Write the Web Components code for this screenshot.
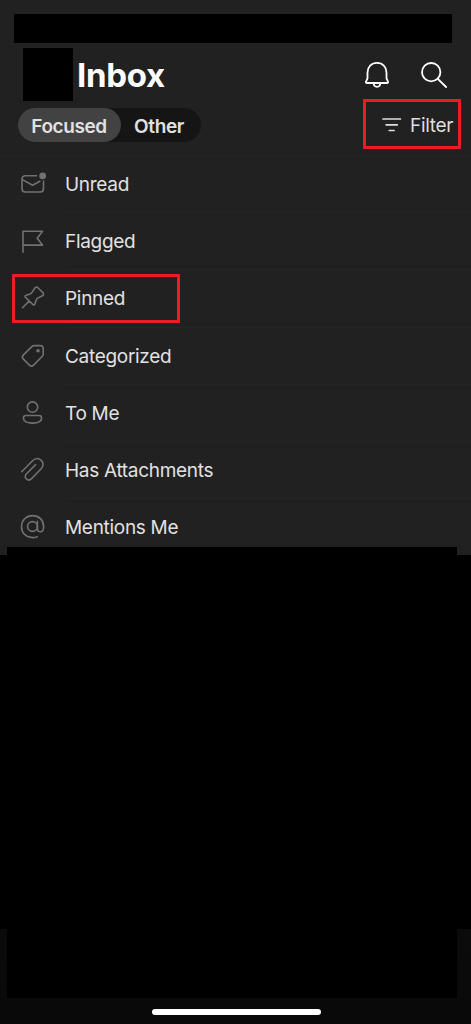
<!DOCTYPE html>
<html lang="en">
<head>
<meta charset="utf-8">
<title>Inbox</title>
<style>
html,body{margin:0;padding:0;background:#000}
body{font-family:Inter,"Liberation Sans",sans-serif}
</style>
</head>
<body>
<mail-app></mail-app>
<script>
const ICONS = {
  unread: '<g transform="translate(0 .8)"><path d="M16.6 4.9H5.2a3.2 3.2 0 0 0-3.2 3.2V18a3.2 3.2 0 0 0 3.2 3.2h15.1a3.2 3.2 0 0 0 3.2-3.2v-7.700M2.300 8.800l10.300 5.600 7.200-4"/><circle cx="22.700" cy="5.100" r="3.400" fill="currentColor" stroke="none"/></g>',
  flag: '<path d="M3 25.3V4.300h19.500l-5.300 6.900 5.300 6.900H3"/>',
  pin: '<path d="M15.1 3.7a2 2 0 0 1 2.8 0l5 4.9a2 2 0 0 1-.5 3.2l-5.1 2.6a2 2 0 0 0-.9 1.1l-1.6 4.7a1.1 1.1 0 0 1-1.8.4L5.400 13.200a1.100 1.100 0 0 1 .4-1.800l4.700-1.600a2 2 0 0 0 1.100-.9zM9.100 17.100l-6.600 6.600"/>',
  tag: '<path d="M14.2 3.6h6.2a2.8 2.8 0 0 1 2.8 2.8v5.8a3 3 0 0 1-.9 2.1l-8.7 8.8a3 3 0 0 1-4.2 0l-6-6a3 3 0 0 1 0-4.2l8.7-8.500a3 3 0 0 1 2.100-.8z"/><circle cx="18" cy="8.7" r="1.800" fill="currentColor" stroke="none"/>',
  person: '<circle cx="12.5" cy="8.1" r="5.2"/><path d="M6 16.500h13a2.600 2.600 0 0 1 2.600 2.600c0 3.300-3.800 5-9.100 5s-9.100-1.700-9.100-5A2.600 2.600 0 0 1 6 16.500z"/>',
  clip: '<path d="M1.700 15.700 12.300 5c3-3 6.300-3.100 8.900-.7 2.600 2.500 2.400 5.900-.3 8.700l-9.300 9.600c-1.700 1.700-3.800 1.700-5.300.3s-1.400-3.400.2-5.100l9.100-9.200"/>',
  at: '<circle cx="12.500" cy="13.500" r="4.900"/><path d="M17.400 8.300v6.900c0 2.400 1.200 3.600 3 3.600 2 0 3.200-1.900 3.200-5.300 0-6.400-4.600-10.900-11-10.900S1.500 7.300 1.500 13.700 6.200 24.600 12.600 24.600c1.900 0 3.200-.3 4.600-.9"/>',
  bell: '<path d="M14 2.900c-5.600 0-9.500 4.100-9.500 9.600v5.900L3 21.700c-.3.800.1 1.300.9 1.300h20.200c.8 0 1.200-.5.900-1.300l-1.500-3.300v-5.900c0-5.500-3.900-9.600-9.500-9.600zM10.600 23c.1 2.400 1.400 3.800 3.400 3.800s3.300-1.400 3.400-3.800"/>',
  search: '<circle cx="11.200" cy="12.200" r="9.200"/><path d="m17.800 18.800 8.300 8.200"/>',
  filter: '<path d="M1 3h17.400M4.100 8.800h11.200M7.300 14.500h4.800"/>'
};

function define(name, html) {
  const t = document.createElement('template');
  t.innerHTML = html;
  customElements.define(name, class extends HTMLElement {
    constructor() {
      super();
      this.attachShadow({mode: 'open'}).append(t.content.cloneNode(true));
    }
  });
}

customElements.define('mail-icon', class extends HTMLElement {
  static observedAttributes = ['name', 'box'];
  connectedCallback() { this.render(); }
  attributeChangedCallback() { this.render(); }
  render() {
    const root = this.shadowRoot || this.attachShadow({mode: 'open'});
    root.innerHTML = `<style>:host{display:block;flex:none}svg{display:block;width:100%;height:100%;fill:none;stroke:currentColor;stroke-width:var(--stroke,1.600);stroke-linecap:round;stroke-linejoin:round}</style>
      <svg viewBox="${this.getAttribute('box') || '0 0 26 27'}">${ICONS[this.getAttribute('name')] || ''}</svg>`;
  }
});

define('filter-row', `<style>
:host{display:flex;position:relative;box-sizing:border-box;height:57.2px;align-items:center;padding-left:20px;color:#e1e1e1;font-size:19px;letter-spacing:-.3px}
mail-icon{width:26px;height:27px;margin-bottom:2px;color:#717171}
.label{align-self:stretch;flex:1;display:flex;align-items:center;margin-left:19px;padding-top:1px;box-sizing:border-box;border-bottom:1px solid #252525;white-space:nowrap}
:host([last]) .label{border-color:transparent}
:host([marked])::before{content:"";position:absolute;left:12px;top:4px;width:162px;height:43px;border:3px solid #ed1c24}
</style><mail-icon></mail-icon><span class="label"><slot></slot></span>`);

customElements.define('filter-item', class extends customElements.get('filter-row') {
  connectedCallback() {
    this.shadowRoot.querySelector('mail-icon').setAttribute('name', this.getAttribute('icon'));
  }
});

define('inbox-title', `<style>
:host{display:flex;height:51px;padding:0 23px;align-items:flex-start;color:#fff}
.avatar{width:50px;height:53px;background:#000}
h1{margin:6px 0 0 4px;font-size:33px;line-height:42px;font-weight:700;letter-spacing:-.3px;flex:1}
mail-icon{width:28px;height:30px;margin-top:12px;--stroke:1.800}
.search{margin-left:29px}
</style><div class="avatar"></div><h1>Inbox</h1><mail-icon name="bell" box="0 0 28 30"></mail-icon><mail-icon class="search" name="search" box="0 0 28 30"></mail-icon>`);

define('focus-switch', `<style>
:host{display:flex;width:183px;height:34px;border-radius:17px;background:#151515;color:#e1e1e1;font-size:19px;font-weight:600;letter-spacing:-.4px}
span{display:flex;align-items:center;justify-content:center;padding-top:2px;box-sizing:border-box}
.on{width:103px;padding-right:1px;border-radius:17px;background:#424242}
.off{width:76px}
</style><span class="on">Focused</span><span class="off">Other</span>`);

define('filter-button', `<style>
:host{display:flex;box-sizing:border-box;width:98px;height:50px;border:3px solid #ed1c24;align-items:center;padding:2px 0 0 16px;color:#dedede;font-size:19px;letter-spacing:-.3px}
mail-icon{width:20px;height:18px;--stroke:1.700}
span{margin-left:8px}
</style><mail-icon name="filter" box="0 0 20 18"></mail-icon><span>Filter</span>`);

define('home-area', `<style>
:host{display:block;height:469px;background:linear-gradient(#000 374px,#0b0b0b 374px,#090909)}
.mask{position:relative;height:451px;width:450px;margin-left:7px;top:-8px;background:#000}
.bar{width:169px;height:6px;border-radius:3px;background:#fff;margin:3px 0 0 152px}
</style><div class="mask"></div><div class="bar"></div>`);

define('mail-app', `<style>
:host{display:flex;flex-direction:column;width:471px;height:1024px;overflow:hidden;background:#212121}
.status{height:29px;margin:14px 19px 5px 14px;background:#000;flex:none}
.tools{display:flex;justify-content:space-between;height:56px;padding:0 10px 0 18px;border-bottom:1px solid #252525;box-sizing:content-box;flex:none}
focus-switch{margin-top:9px}
.list{height:399px;flex:none}
home-area{flex:none}
</style>
<div class="status"></div>
<inbox-title></inbox-title>
<div class="tools"><focus-switch></focus-switch><filter-button></filter-button></div>
<div class="list">
<filter-item icon="unread">Unread</filter-item>
<filter-item icon="flag">Flagged</filter-item>
<filter-item icon="pin" marked>Pinned</filter-item>
<filter-item icon="tag">Categorized</filter-item>
<filter-item icon="person">To Me</filter-item>
<filter-item icon="clip">Has Attachments</filter-item>
<filter-item icon="at" last>Mentions Me</filter-item>
</div>
<home-area></home-area>`);
</script>
</body>
</html>
